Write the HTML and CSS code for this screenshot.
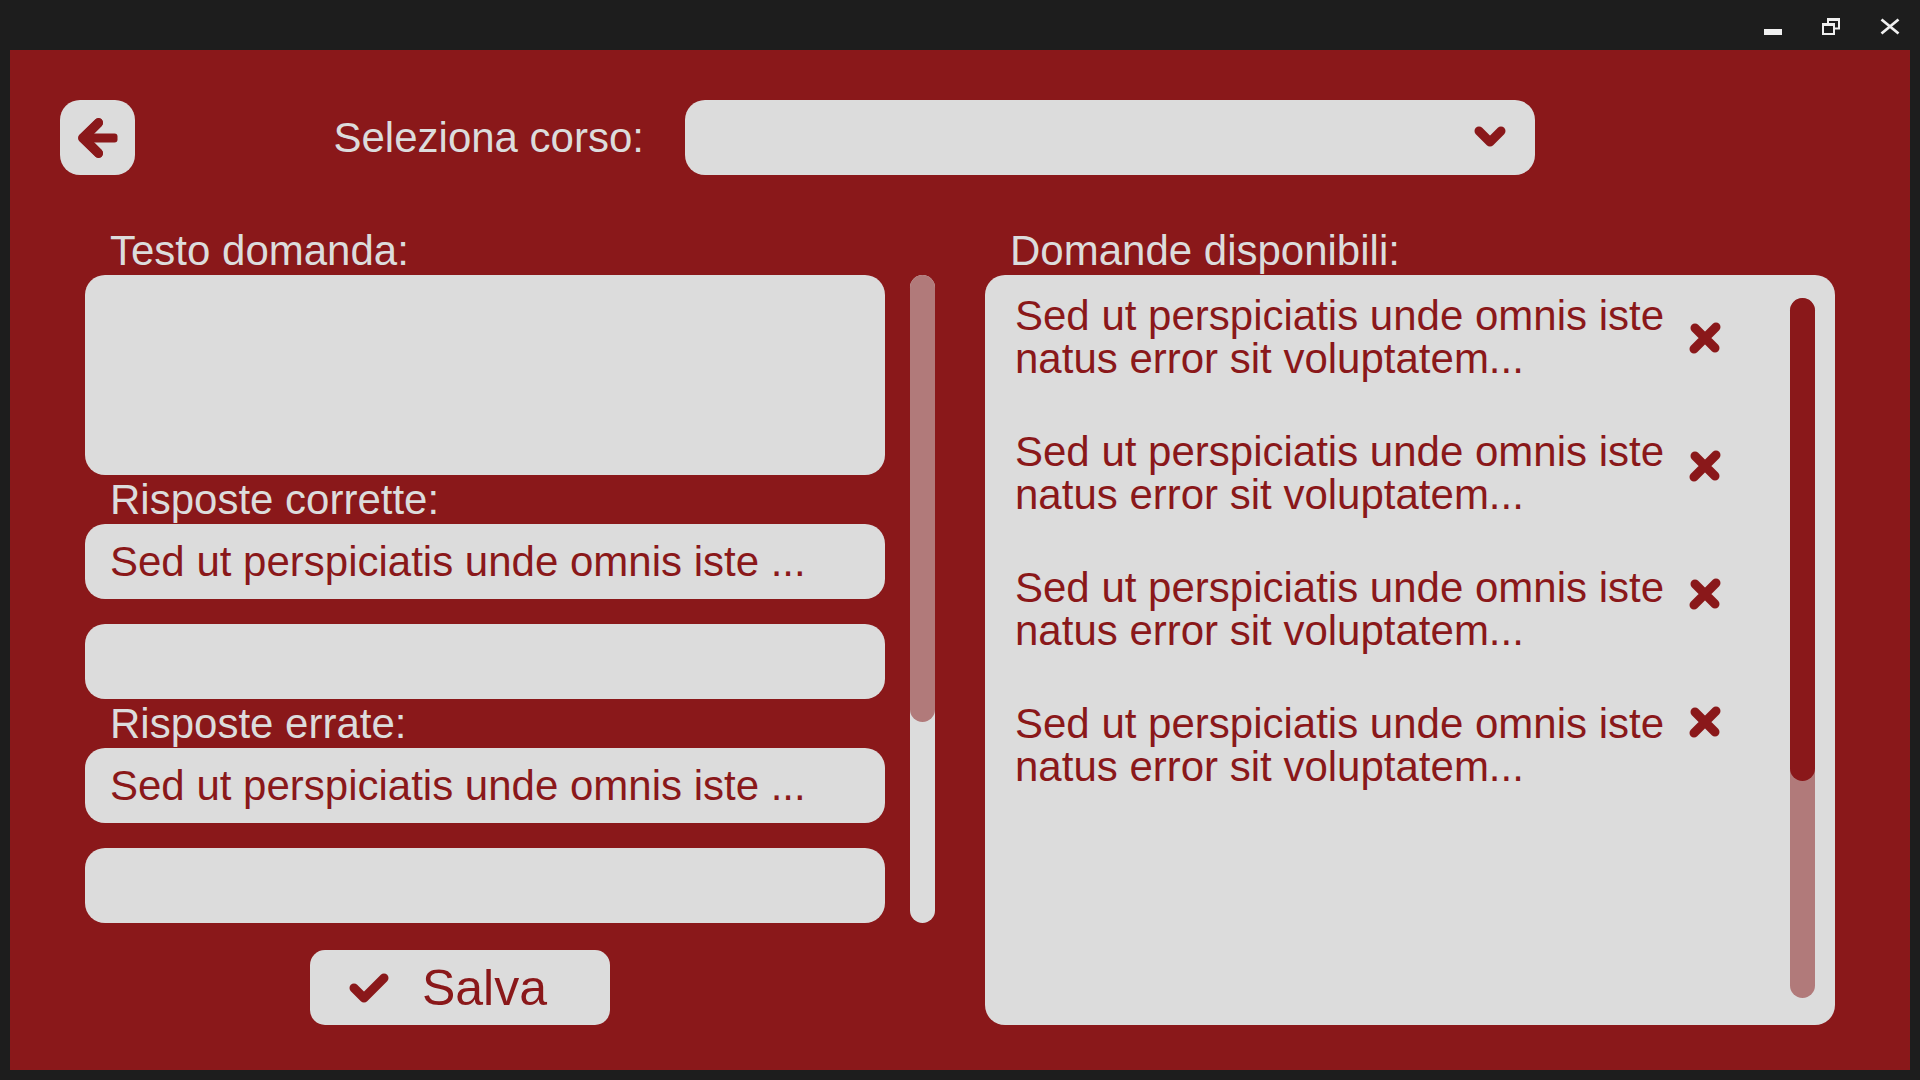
FILE: index.html
```html
<!DOCTYPE html>
<html lang="it">
<head>
  <meta charset="utf-8">
  <meta name="viewport" content="width=device-width, initial-scale=1">
  <title>Gestione domande</title>
  <link rel="stylesheet" href="styles.css">
</head>
<body>
  <div class="window">
    <div class="titlebar">
      <button class="titlebar-button" type="button" aria-label="Riduci a icona">
        <svg width="20" height="18" viewBox="0 0 20 18"><rect x="2" y="12" width="18" height="6" fill="#f0f0f0"/></svg>
      </button>
      <button class="titlebar-button" type="button" aria-label="Ripristina">
        <svg width="20" height="18" viewBox="0 0 20 18"><g fill="none" stroke="#f0f0f0"><path d="M7 6V2.500H18V11.500H13.500" stroke-width="2"/><path d="M6 2.500H19" stroke-width="3"/><rect x="2" y="7" width="11" height="10" stroke-width="2"/><path d="M1 7.500H14" stroke-width="3"/></g></svg>
      </button>
      <button class="titlebar-button" type="button" aria-label="Chiudi">
        <svg width="20" height="18" viewBox="0 0 20 18"><path d="M1.500 2.500L18.500 16.500M18.500 2.500L1.500 16.500" stroke="#f0f0f0" stroke-width="2.800"/></svg>
      </button>
    </div>

    <main class="panel">
      <header class="toolbar">
        <button class="back-button" type="button" aria-label="Indietro">
          <svg width="40" height="40" viewBox="0 0 40 40"><path d="M20.500 5L5.500 20L20.500 35" class="stroke"/><path d="M4.500 20L20.500 4.500M4.500 20L20.500 35.500" class="stroke"/><rect x="8" y="15.500" width="31.500" height="9" rx="3" fill="#8a181a"/></svg>
        </button>
        <label class="course-label" for="course">Seleziona corso:</label>
        <div class="course-picker">
          <select class="course-select" id="course"><option value=""></option></select>
          <svg class="chevron" width="32" height="22" viewBox="0 0 32 22"><path d="M5 5L16 16L27 5" class="stroke"/></svg>
        </div>
      </header>

      <div class="columns">
        <form class="editor">
          <div class="editor-scroll">
            <div class="fields">
              <label class="label" for="question">Testo domanda:</label>
              <textarea class="field field-tall" id="question"></textarea>
              <label class="label" for="correct-1">Risposte corrette:</label>
              <div class="answers">
                <input class="field" id="correct-1" type="text" value="Sed ut perspiciatis unde omnis iste ...">
                <input class="field" type="text" aria-label="Risposta corretta 2">
              </div>
              <label class="label" for="wrong-1">Risposte errate:</label>
              <div class="answers">
                <input class="field" id="wrong-1" type="text" value="Sed ut perspiciatis unde omnis iste ...">
                <input class="field" type="text" aria-label="Risposta errata 2">
              </div>
            </div>
            <div class="track track-light"><div class="thumb thumb-light"></div></div>
          </div>
          <button class="save-button" type="submit">
            <svg width="42" height="32" viewBox="0 0 42 32"><path d="M6 16L16 26L36 6" class="stroke"/></svg>
            Salva
          </button>
        </form>

        <section class="available">
          <h2 class="label" id="available-title">Domande disponibili:</h2>
          <div class="card">
            <ul class="questions" aria-labelledby="available-title">
              <li>Sed ut perspiciatis unde omnis iste natus error sit voluptatem...</li>
              <li>Sed ut perspiciatis unde omnis iste natus error sit voluptatem...</li>
              <li>Sed ut perspiciatis unde omnis iste natus error sit voluptatem...</li>
              <li>Sed ut perspiciatis unde omnis iste natus error sit voluptatem...</li>
            </ul>
            <div class="removers">
              <button class="remove-button" type="button" aria-label="Elimina domanda 1">
                <svg width="32" height="32" viewBox="0 0 32 32"><path d="M6 6L26 26M27 5L5 27" class="stroke"/></svg>
              </button>
              <button class="remove-button" type="button" aria-label="Elimina domanda 2">
                <svg width="32" height="32" viewBox="0 0 32 32"><path d="M6 6L26 26M27 5L5 27" class="stroke"/></svg>
              </button>
              <button class="remove-button" type="button" aria-label="Elimina domanda 3">
                <svg width="32" height="32" viewBox="0 0 32 32"><path d="M6 6L26 26M27 5L5 27" class="stroke"/></svg>
              </button>
              <button class="remove-button" type="button" aria-label="Elimina domanda 4">
                <svg width="32" height="32" viewBox="0 0 32 32"><path d="M6 6L26 26M27 5L5 27" class="stroke"/></svg>
              </button>
            </div>
            <div class="track track-dark"><div class="thumb thumb-dark"></div></div>
          </div>
        </section>
      </div>
    </main>
  </div>
</body>
</html>
```
FILE: styles.css
```css
:root {
  --red: #8a181a;
  --light: #dcdcdc;
  --rose: #b17a7a;
  --dark: #1d1d1d;
}

* {
  box-sizing: border-box;
}

body {
  margin: 0;
  background: var(--dark);
  color: var(--light);
  font-family: "Liberation Sans", Arial, sans-serif;
  font-size: 42px;
}

button,
input,
select,
textarea {
  margin: 0;
  border: 0;
  color: var(--red);
  font: inherit;
}

button {
  display: flex;
  align-items: center;
  justify-content: center;
  padding: 0;
  cursor: pointer;
}

svg {
  display: block;
  flex: none;
}

.stroke {
  fill: none;
  stroke: var(--red);
  stroke-width: 9;
  stroke-linecap: round;
  stroke-linejoin: round;
}

.window {
  display: flex;
  flex-direction: column;
  min-height: 100vh;
  padding: 0 10px 10px;
}

.titlebar {
  display: flex;
  align-items: center;
  justify-content: flex-end;
  gap: 19px;
  height: 50px;
  padding-top: 2px;
}

.titlebar-button {
  width: 40px;
  height: 40px;
  background: none;
}

.panel {
  display: flex;
  flex: 1;
  flex-direction: column;
  gap: 51px;
  padding: 50px 75px 45px;
  background: var(--red);
}

.toolbar {
  display: grid;
  grid-template-columns: 75px 550fr 850fr 325fr;
  align-items: center;
  margin: 0 -25px;
}

.back-button {
  height: 75px;
  border-radius: 20px;
  background: var(--light);
}

.course-label {
  padding-right: 41px;
  text-align: right;
}

.course-picker {
  position: relative;
}

.course-select {
  display: block;
  width: 100%;
  height: 75px;
  padding: 0 90px 0 25px;
  border-radius: 20px;
  appearance: none;
  background: var(--light);
}

.chevron {
  position: absolute;
  top: 26px;
  right: 29px;
  pointer-events: none;
}

.columns {
  display: grid;
  flex: 1;
  grid-template-columns: 1fr 1fr;
  gap: 50px;
}

.editor,
.available {
  display: flex;
  flex-direction: column;
  min-width: 0;
}

.editor {
  justify-content: space-between;
}

.editor-scroll {
  display: flex;
  gap: 25px;
}

.fields {
  display: flex;
  flex: 1;
  flex-direction: column;
  min-width: 0;
}

.label {
  display: block;
  margin: 0;
  padding-left: 25px;
  font-size: 42px;
  font-weight: 400;
  line-height: 49px;
}

.answers {
  display: flex;
  flex-direction: column;
  gap: 25px;
}

.field {
  display: block;
  width: 100%;
  height: 75px;
  padding: 0 25px;
  border-radius: 20px;
  background: var(--light);
}

.field-tall {
  height: 200px;
  padding: 15px 25px;
  resize: none;
}

.track {
  flex: none;
  width: 25px;
  border-radius: 13px;
}

.track-light {
  margin-top: 49px;
  background: var(--light);
}

.track-dark {
  margin: 4px 0 8px;
  background: var(--rose);
}

.thumb {
  height: 69%;
  border-radius: 13px;
}

.thumb-light {
  background: var(--rose);
}

.thumb-dark {
  background: var(--red);
}

.save-button {
  gap: 32px;
  align-self: center;
  width: 300px;
  height: 75px;
  margin-right: 100px;
  padding-right: 25px;
  border-radius: 15px;
  background: var(--light);
  font-size: 50px;
}

.card {
  display: flex;
  flex: 1;
  padding: 19px 20px 19px 30px;
  border-radius: 20px;
  background: var(--light);
}

.questions {
  display: flex;
  flex: 1;
  flex-direction: column;
  gap: 50px;
  min-width: 0;
  margin: 0;
  padding: 0;
  color: var(--red);
  line-height: 43px;
  list-style: none;
}

.removers {
  display: flex;
  flex-direction: column;
  gap: 84px;
  margin-right: 63px;
  padding-top: 22px;
}

.remove-button {
  width: 44px;
  height: 44px;
  background: none;
}
```
